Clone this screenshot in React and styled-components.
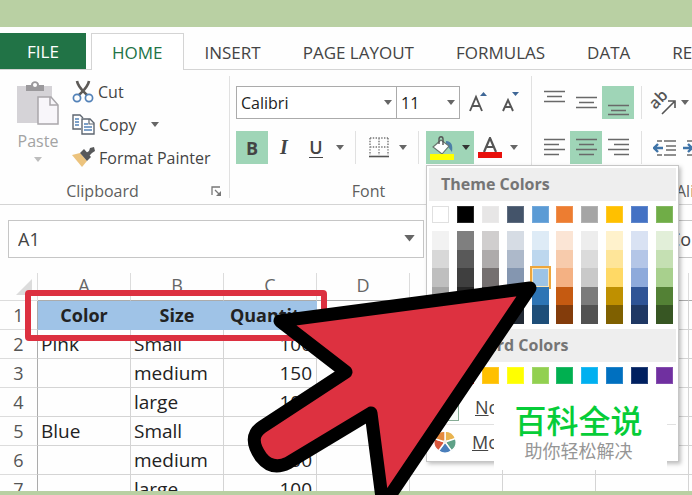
import React, { useState } from 'react';
import styled, { createGlobalStyle } from 'styled-components';

const GlobalStyle = createGlobalStyle`
  * {
    box-sizing: border-box;
  }

  body {
    margin: 0;
    background: #ffffff;
  }

  body, button, input, select {
    font-family: "Open Sans", "Noto Sans", sans-serif;
    font-size: 16px;
    color: #444444;
  }
`;

const Page = styled.div`
  position: relative;
  display: flex;
  flex-direction: column;
  height: 100vh;
  overflow: hidden;
  background: #fefefe;
`;

const TopBand = styled.div`
  flex: none;
  height: 27px;
  background: #b9d0a3;
`;

const BottomBand = styled.div`
  flex: none;
  height: 4px;
  background: #b9d0a3;
`;

const Tabs = styled.nav`
  display: flex;
  flex: none;
  height: 43px;
  padding-top: 6px;
  border-bottom: 1px solid #d4d4d4;
`;

const FileTab = styled.button`
  flex: none;
  width: 86px;
  margin-right: 5px;
  padding: 0;
  border: none;
  background: #217346;
  color: #ffffff;
  font-size: 17px;
`;

const Tab = styled.button`
  flex: none;
  height: 37px;
  padding: 0 20px;
  border: 1px solid ${({ $active }) => ($active ? '#d4d4d4' : 'transparent')};
  border-bottom: none;
  background: ${({ $active }) => ($active ? '#ffffff' : 'none')};
  color: ${({ $active }) => ($active ? '#217346' : '#444444')};
  font-size: 17px;
`;

const Ribbon = styled.div`
  display: flex;
  flex: none;
  height: 135px;
  padding-top: 6px;
  border-bottom: 1px solid #d4d4d4;
`;

const Group = styled.section`
  display: flex;
  flex: none;
  flex-direction: column;
  width: ${({ $width }) => $width}px;
`;

const GroupDivider = styled.div`
  flex: none;
  width: 1px;
  height: 122px;
  background: #e1e1e1;
`;

const GroupFooter = styled.div`
  display: flex;
  align-items: center;
  height: 26px;
`;

const GroupLabel = styled.span`
  flex: 1;
  text-align: center;
  color: #5f5f5f;
`;

const Launcher = styled.button`
  display: flex;
  width: 24px;
  padding: 2px 6px;
  border: none;
  background: none;
`;

const ClipboardBody = styled.div`
  display: flex;
  flex: 1;
`;

const PasteButton = styled.button`
  display: flex;
  flex-direction: column;
  align-items: center;
  width: 68px;
  padding: 5px 0 0 8px;
  border: none;
  background: none;
  color: #a3a3a3;
  line-height: 32px;
`;

const ClipboardList = styled.div`
  display: flex;
  flex-direction: column;
`;

const ClipboardButton = styled.button`
  display: flex;
  align-items: center;
  gap: 4px;
  height: 33px;
  padding: 0 4px 2px;
  border: none;
  background: none;

  svg:last-child {
    margin-left: 10px;
  }
`;

const Rows = styled.div`
  display: flex;
  flex: 1;
  flex-direction: column;
  gap: 12px;
  padding: 10px 0 0 6px;
`;

const Row = styled.div`
  display: flex;
  height: 33px;
`;

const SelectWrap = styled.div`
  position: relative;
  width: ${({ $width }) => $width}px;
  margin-right: ${({ $gap }) => $gap}px;

  > svg {
    position: absolute;
    right: 5px;
    top: 14px;
    pointer-events: none;
  }
`;

const Select = styled.select`
  width: 100%;
  height: 33px;
  padding: 0 4px;
  border: 1px solid #ababab;
  border-radius: 0;
  background: #ffffff;
  color: #222222;
  appearance: none;
`;

const Tool = styled.button`
  display: flex;
  flex: none;
  align-items: center;
  justify-content: center;
  width: ${({ $width }) => $width || 32}px;
  height: 33px;
  padding: 0;
  border: none;
  background: ${({ $on }) => ($on ? '#9fd5b7' : 'none')};
  font-size: 18px;
`;

const ToolCaret = styled(Tool)`
  width: 16px;
`;

const Bold = styled.b`
  font-weight: 700;
`;

const Italic = styled.i`
  font-family: "Liberation Serif", serif;
  font-size: 20px;
  font-weight: 700;
`;

const Underline = styled.span`
  border-bottom: 1px solid #444444;
  font-weight: 600;
  line-height: 20px;
`;

const ToolDivider = styled.div`
  flex: none;
  width: 1px;
  margin: 0 7px;
  background: #e1e1e1;
`;

const MenuAnchor = styled.div`
  position: relative;
  display: flex;
`;

const Menu = styled.div`
  position: absolute;
  z-index: 2;
  top: 34px;
  left: 0;
  width: 253px;
  padding: 2px;
  border: 1px solid #c6c6c6;
  background: #ffffff;
  box-shadow: 2px 2px 4px rgba(0, 0, 0, 0.25);
`;

const MenuTitle = styled.h2`
  margin: 0;
  padding-left: 12px;
  background: #eeeeee;
  color: #757575;
  font-size: 16px;
  font-weight: 700;
  line-height: 33px;
`;

const Swatches = styled.div`
  display: grid;
  grid-template-columns: repeat(10, 17px);
  justify-content: space-between;
  padding: 5px 3px;
`;

const Swatch = styled.button`
  height: 17px;
  padding: 0;
  border: 1px solid ${({ $light }) => ($light ? '#e0e0e0' : 'rgba(255, 255, 255, 0.15)')};
  background: ${({ $color }) => $color};
`;

const Shades = styled.div`
  display: grid;
  grid-template-columns: repeat(10, 17px);
  grid-template-rows: repeat(5, 1fr);
  justify-content: space-between;
  height: 101px;
  padding: 3px 3px 5px;
`;

const Shade = styled.button`
  padding: 0;
  border: none;
  background: ${({ $color }) => $color};
  outline: ${({ $picked }) => ($picked ? '2px solid #eda63c' : 'none')};
  box-shadow: ${({ $picked }) => ($picked ? 'inset 0 0 0 1px #fbe6b8' : 'none')};
`;

const MenuItem = styled.button`
  display: flex;
  align-items: center;
  gap: 16px;
  width: 100%;
  height: 35px;
  padding: 0 5px;
  border: none;
  border-top: 1px solid ${({ $line }) => ($line ? '#e1e1e1' : 'transparent')};
  background: none;
  font-size: 18px;
`;

const NoFillBox = styled.span`
  width: 25px;
  height: 27px;
  border: 1px solid #86ac95;
  background: #f6fbf8;
`;

const FormulaBar = styled.div`
  display: flex;
  flex: none;
  gap: 7px;
  padding: 15px 0 15px 8px;
`;

const NameBox = styled.div`
  position: relative;
  flex: none;
  width: 416px;

  > svg {
    position: absolute;
    right: 9px;
    top: 15px;
  }
`;

const CellInput = styled.input`
  display: block;
  width: 100%;
  height: 38px;
  padding: 0 9px;
  border: 1px solid #c6c6c6;
  font-size: 18px;
`;

const FormulaInput = styled(CellInput)`
  flex: 1;
  min-width: 320px;
  padding-left: 237px;
`;

const Sheet = styled.main`
  position: relative;
  flex: 1;
  min-height: 0;
  overflow: hidden;
`;

const Grid = styled.table`
  width: 782px;
  border-collapse: separate;
  border-spacing: 0;
  table-layout: fixed;
  color: #222222;
  font-size: 19px;
  line-height: 28px;
`;

const Corner = styled.th`
  width: 38px;
  height: 28px;
  padding: 5px 5px 5px 16px;
  border-right: 1px solid #dcdcdc;
  border-bottom: 1px solid #dcdcdc;

  svg {
    display: block;
  }
`;

const ColHead = styled.th`
  width: 93px;
  height: 28px;
  padding: 0 0 3px;
  border-right: 1px solid #dcdcdc;
  border-bottom: 1px solid #ababab;
  color: #666666;
  font-size: 18px;
  font-weight: 400;
  line-height: 24px;
`;

const RowHead = styled.th`
  height: 29px;
  padding: 0;
  border-right: 1px solid #ababab;
  border-bottom: 1px solid #dcdcdc;
  color: #555555;
  font-size: 18px;
  font-weight: 400;
`;

const Cell = styled.td`
  height: 29px;
  padding: 0 4px 0 3px;
  border-right: 1px solid #d4d4d4;
  border-bottom: 1px solid #d4d4d4;
  text-align: ${({ $align }) => $align || 'left'};
`;

const HeadCell = styled(Cell)`
  padding: 0;
  border-color: #9fc3e7;
  background: #9fc3e7;
  font-size: 18px;
  font-weight: 700;
  text-align: center;
`;

const Highlight = styled.div`
  position: absolute;
  top: 17px;
  left: 25px;
  width: 302px;
  height: 51px;
  border: 6px solid #dc3040;
  border-radius: 4px;
`;

const Pointer = styled.svg`
  position: absolute;
  z-index: 3;
  top: 270px;
  left: 240px;
  pointer-events: none;
`;

const Badge = styled.aside`
  position: absolute;
  z-index: 4;
  right: 25px;
  bottom: 25px;
  width: 173px;
  height: 82px;
  padding: 12px 4px 0 0;
  background: #ffffff;
  font-family: "Noto Sans CJK SC", sans-serif;
  text-align: center;
`;

const BadgeTitle = styled.div`
  color: #06cd38;
  font-size: 32px;
  font-weight: 500;
  line-height: 38px;
`;

const BadgeText = styled.div`
  color: #969696;
  font-size: 18px;
  line-height: 24px;
`;

const themeColors = ['#ffffff', '#000000', '#e7e6e6', '#44546a', '#5b9bd5', '#ed7d31', '#a5a5a5', '#ffc000', '#4472c4', '#70ad47'];

const shades = [
  ['#f2f2f2', '#7f7f7f', '#d0cece', '#d6dce4', '#deebf6', '#fbe5d5', '#ededed', '#fff2cc', '#d9e2f3', '#e2efd9'],
  ['#d8d8d8', '#595959', '#aeabab', '#adb9ca', '#bdd7ee', '#f7cbac', '#dbdbdb', '#fee599', '#b4c6e7', '#c5e0b3'],
  ['#bfbfbf', '#3f3f3f', '#757070', '#8496b0', '#9cc3e5', '#f4b183', '#c9c9c9', '#ffd965', '#8eaadb', '#a8d08d'],
  ['#a5a5a5', '#262626', '#3a3838', '#323f4f', '#2e75b5', '#c55a11', '#7b7b7b', '#bf9000', '#2f5496', '#538135'],
  ['#7f7f7f', '#0c0c0c', '#171616', '#222a35', '#1e4e79', '#833c0b', '#525252', '#7f6000', '#1f3864', '#375623'],
];

const standardColors = ['#c00000', '#ff0000', '#ffc000', '#ffff00', '#92d050', '#00b050', '#00b0f0', '#0070c0', '#002060', '#7030a0'];

const rows = [
  ['Pink', 'Small', '100'],
  ['', 'medium', '150'],
  ['', 'large', '100'],
  ['Blue', 'Small', '150'],
  ['', 'medium', '100'],
  ['', 'large', '100'],
];

const columns = ['A', 'B', 'C', 'D', 'E', 'F', 'G', 'H'];

const Caret = ({ size = 8, color = '#666666' }) => (
  <svg width={size} height={size / 2 + 1} viewBox="0 0 8 5" aria-hidden="true">
    <path d="M0 0h8L4 5z" fill={color} />
  </svg>
);

const PasteIcon = () => (
  <svg width="42" height="44" viewBox="0 0 42 44" fill="none">
    <path d="M0 5h35v37H0z" fill="#d5d3d7" />
    <path d="M9 10V4h5c0-5 8-5 8 0h5v6z" fill="#9b999c" />
    <circle cx="18" cy="4" r="2" fill="#fff" />
    <path d="M21 16h13l7 8v19H21z" fill="#f8f6fa" stroke="#a9a7ab" strokeWidth="1.5" />
    <path d="M33 16v8h8" stroke="#a9a7ab" strokeWidth="1.5" />
  </svg>
);

const CutIcon = () => (
  <svg width="22" height="23" viewBox="0 0 22 23" fill="none">
    <path d="M5 1c1 6 5 9 10 14M17 1c-1 6-5 9-10 14" stroke="#5d5a57" strokeWidth="2.6" />
    <circle cx="5" cy="18" r="3.6" stroke="#5382b8" strokeWidth="1.7" />
    <circle cx="17" cy="18" r="3.6" stroke="#5382b8" strokeWidth="1.7" />
  </svg>
);

const CopyIcon = () => (
  <svg width="23" height="21" viewBox="0 0 23 21" fill="none">
    <path d="M9 15H1V1h7l3 3" stroke="#5e6670" strokeWidth="1.4" />
    <path d="M3 5h4M3 8h4M3 11h4" stroke="#5382b8" strokeWidth="1.3" />
    <path d="M10 5h8l4 4v11H10z" fill="#fff" stroke="#5e6670" strokeWidth="1.4" />
    <path d="M17 5v5h5" stroke="#5e6670" strokeWidth="1.2" />
    <path d="M12 10h4M12 13h8M12 16h8" stroke="#5382b8" strokeWidth="1.3" />
  </svg>
);

const PainterIcon = () => (
  <svg width="23" height="21" viewBox="0 0 23 21">
    <path d="M0 8l8-2 7 8-5 6z" fill="#ecc37d" />
    <path d="M8 6l4-4 7 8-4 4z" fill="#57585a" />
    <path d="M14 6l3-2 1-3 4-1 1 4-3 2-3 3z" fill="#57585a" />
  </svg>
);

const LauncherIcon = () => (
  <svg width="11" height="11" viewBox="0 0 11 11" fill="none">
    <path d="M1 9V1h8M4 4l5 5" stroke="#777" strokeWidth="1.3" />
    <path d="M10 5v5H5z" fill="#777" />
  </svg>
);

const SizeIcon = ({ up }) => (
  <svg width="20" height="24" viewBox="0 0 20 24" fill="none">
    {up ? (
      <path d="M2 20L8 6l6 14M4 15h8" stroke="#555" strokeWidth="1.9" />
    ) : (
      <path d="M3 20L8 9l5 11M5 16h6" stroke="#555" strokeWidth="1.9" />
    )}
    <path d={up ? 'M12 5l3.5-4L19 5z' : 'M12 1h7l-3.5 4z'} fill="#3f6797" />
  </svg>
);

const BorderIcon = () => (
  <svg width="20" height="21" viewBox="0 0 20 21" fill="none">
    <path d="M1 1h18M1 10h18M1 1v17M10 1v17M19 1v17" stroke="#777" strokeWidth="1.4" strokeDasharray="1.4 1.4" />
    <path d="M0 19.5h20" stroke="#555" strokeWidth="1.6" />
  </svg>
);

const FillIcon = () => (
  <svg width="24" height="24" viewBox="0 0 24 24" fill="none">
    <path d="M16 5c6 0 7 5 6 11-2-2-3-5-6-7z" fill="#4c7fa8" />
    <path d="M3 11l8-7 8 6-7 8z" fill="#fff" stroke="#66756c" strokeWidth="1.1" />
    <path d="M9 8V3c0-3 4-3 4 0v6" stroke="#555" strokeWidth="1.4" />
    <path d="M0 18h24v6H0z" fill="#ffff00" />
  </svg>
);

const FontColorIcon = () => (
  <svg width="24" height="21" viewBox="0 0 24 21" fill="none">
    <path d="M6 15L12 1l6 14M8 10h8" stroke="#555" strokeWidth="2.2" />
    <path d="M0 15h24v6H0z" fill="#e8100c" />
  </svg>
);

const linePaths = {
  top: 'M0 3.5h21M3 8.5h15M0 13.5h21',
  middle: 'M0 9.5h21M3 14.5h15M0 19.5h21',
  bottom: 'M0 17.5h21M3 22.5h15M0 26.5h21',
  left: 'M0 6.5h21M0 11.5h15M0 16.5h21M0 21.5h15',
  center: 'M0 6.5h21M3 11.5h15M0 16.5h21M3 21.5h15',
  right: 'M0 6.5h21M6 11.5h15M0 16.5h21M6 21.5h15',
};

const LinesIcon = ({ kind }) => (
  <svg width="21" height="29" viewBox="0 0 21 29">
    <path d={linePaths[kind]} stroke="#696969" strokeWidth="1.4" />
  </svg>
);

const OrientationIcon = () => (
  <svg width="26" height="26" viewBox="0 0 26 26" fill="none">
    <text x="-1" y="15" transform="rotate(-45 8 10)" fontSize="16" fontWeight="600" fill="#555">ab</text>
    <path d="M12 24L24 12M18 11h7v7" stroke="#555" strokeWidth="1.6" />
  </svg>
);

const IndentIcon = ({ more }) => (
  <svg width="23" height="18" viewBox="0 0 23 18" fill="none">
    <path d="M4 2h5M11 2h12M13 7h10M13 11h10M4 16h5M11 16h12" stroke="#6b6b6b" strokeWidth="1.4" />
    <path d={more ? 'M0 9h8M5 5l4 4-4 4' : 'M10 9H2M5 5L1 9l4 4'} stroke="#3f74a8" strokeWidth="2.4" />
  </svg>
);

const PaletteIcon = () => (
  <svg width="22" height="22" viewBox="-11 -11 22 22" stroke="#fff" strokeWidth="1.4">
    <path d="M0 0V-11A11 11 0 0 1 10.5-3.4z" fill="#e9b44f" />
    <path d="M0 0L10.5-3.4A11 11 0 0 1 6.5 8.9z" fill="#5fa187" />
    <path d="M0 0L6.5 8.9A11 11 0 0 1-6.5 8.9z" fill="#4a7ebb" />
    <path d="M0 0L-6.5 8.9A11 11 0 0 1-10.5-3.4z" fill="#d9573c" />
    <path d="M0 0L-10.5-3.4A11 11 0 0 1 0-11z" fill="#e58a3e" />
    <circle r="2" fill="#f6eee6" stroke="none" />
  </svg>
);

const ColorMenu = ({ picked, onPick }) => (
  <Menu>
    <MenuTitle>Theme Colors</MenuTitle>
    <Swatches>
      {themeColors.map((color, i) => (
        <Swatch key={color} $color={color} $light={i === 0} aria-label={color} onClick={() => onPick(color)} />
      ))}
    </Swatches>
    <Shades>
      {shades.flat().map((color, i) => (
        <Shade key={i} $color={color} $picked={color === picked} aria-label={color} onClick={() => onPick(color)} />
      ))}
    </Shades>
    <MenuTitle>Standard Colors</MenuTitle>
    <Swatches>
      {standardColors.map((color) => (
        <Swatch key={color} $color={color} aria-label={color} onClick={() => onPick(color)} />
      ))}
    </Swatches>
    <MenuItem onClick={() => onPick('')}>
      <NoFillBox />
      <span><u>N</u>o Fill</span>
    </MenuItem>
    <MenuItem $line>
      <PaletteIcon />
      <span><u>M</u>ore Colors...</span>
    </MenuItem>
  </Menu>
);

const ClipboardGroup = () => (
  <Group $width={229}>
    <ClipboardBody>
      <PasteButton>
        <PasteIcon />
        Paste
        <Caret color="#bdbdbd" />
      </PasteButton>
      <ClipboardList>
        <ClipboardButton><CutIcon /><span>Cut</span></ClipboardButton>
        <ClipboardButton><CopyIcon /><span>Copy</span> <Caret /></ClipboardButton>
        <ClipboardButton><PainterIcon /><span>Format Painter</span></ClipboardButton>
      </ClipboardList>
    </ClipboardBody>
    <GroupFooter>
      <GroupLabel>Clipboard</GroupLabel>
      <Launcher aria-label="Clipboard settings"><LauncherIcon /></Launcher>
    </GroupFooter>
  </Group>
);

const FontGroup = () => {
  const [picked, setPicked] = useState('#9cc3e5');
  const [open, setOpen] = useState(true);

  return (
    <Group $width={301}>
      <Rows>
        <Row>
          <SelectWrap $width={161} $gap={-1}>
            <Select aria-label="Font"><option>Calibri</option></Select>
            <Caret />
          </SelectWrap>
          <SelectWrap $width={64} $gap={2}>
            <Select aria-label="Font size"><option>11</option></Select>
            <Caret />
          </SelectWrap>
          <Tool aria-label="Increase font size"><SizeIcon up /></Tool>
          <Tool aria-label="Decrease font size"><SizeIcon /></Tool>
        </Row>
        <Row>
          <Tool $on><Bold>B</Bold></Tool>
          <Tool><Italic>I</Italic></Tool>
          <Tool><Underline>U</Underline></Tool>
          <ToolCaret aria-label="Underline options"><Caret /></ToolCaret>
          <ToolDivider />
          <Tool aria-label="Borders"><BorderIcon /></Tool>
          <ToolCaret aria-label="Border options"><Caret /></ToolCaret>
          <ToolDivider />
          <MenuAnchor>
            <Tool $on aria-label="Fill color"><FillIcon /></Tool>
            <ToolCaret $on aria-label="Fill color options" onClick={() => setOpen(!open)}>
              <Caret color="#333333" />
            </ToolCaret>
            {open && <ColorMenu picked={picked} onPick={setPicked} />}
          </MenuAnchor>
          <Tool aria-label="Font color"><FontColorIcon /></Tool>
          <ToolCaret aria-label="Font color options"><Caret /></ToolCaret>
        </Row>
      </Rows>
      <GroupFooter>
        <GroupLabel>Font</GroupLabel>
        <Launcher aria-label="Font settings"><LauncherIcon /></Launcher>
      </GroupFooter>
    </Group>
  );
};

const AlignmentGroup = () => (
  <Group $width={364}>
    <Rows>
      <Row>
        <Tool aria-label="Top align"><LinesIcon kind="top" /></Tool>
        <Tool aria-label="Middle align"><LinesIcon kind="middle" /></Tool>
        <Tool $on aria-label="Bottom align"><LinesIcon kind="bottom" /></Tool>
        <ToolDivider />
        <Tool $width={28} aria-label="Orientation"><OrientationIcon /></Tool>
        <ToolCaret aria-label="Orientation options"><Caret /></ToolCaret>
      </Row>
      <Row>
        <Tool aria-label="Align left"><LinesIcon kind="left" /></Tool>
        <Tool $on aria-label="Center"><LinesIcon kind="center" /></Tool>
        <Tool aria-label="Align right"><LinesIcon kind="right" /></Tool>
        <ToolDivider />
        <Tool $width={30} aria-label="Decrease indent"><IndentIcon /></Tool>
        <Tool $width={30} aria-label="Increase indent"><IndentIcon more /></Tool>
      </Row>
    </Rows>
    <GroupFooter>
      <GroupLabel>Alignment</GroupLabel>
    </GroupFooter>
  </Group>
);

const SheetGrid = () => (
  <Grid>
    <thead>
      <tr>
        <Corner aria-label="Select all">
          <svg width="16" height="16" viewBox="0 0 16 16"><path d="M16 0v16H0z" fill="#dcdcdc" /></svg>
        </Corner>
        {columns.map((name) => (
          <ColHead key={name}>{name}</ColHead>
        ))}
      </tr>
    </thead>
    <tbody>
      <tr>
        <RowHead>1</RowHead>
        <HeadCell>Color</HeadCell>
        <HeadCell>Size</HeadCell>
        <HeadCell>Quantity</HeadCell>
        {columns.slice(3).map((name) => <Cell key={name} />)}
      </tr>
      {rows.map(([color, size, quantity], i) => (
        <tr key={i}>
          <RowHead>{i + 2}</RowHead>
          <Cell>{color}</Cell>
          <Cell>{size}</Cell>
          <Cell $align="right">{quantity}</Cell>
          {columns.slice(3).map((name) => <Cell key={name} />)}
        </tr>
      ))}
    </tbody>
  </Grid>
);

const App = () => {
  const [cellName, setCellName] = useState('A1');
  const [formula, setFormula] = useState('Color');

  return (
    <Page>
      <GlobalStyle />
      <TopBand />
      <Tabs>
        <FileTab>FILE</FileTab>
        <Tab $active>HOME</Tab>
        <Tab>INSERT</Tab>
        <Tab>PAGE LAYOUT</Tab>
        <Tab>FORMULAS</Tab>
        <Tab>DATA</Tab>
        <Tab>REVIEW</Tab>
      </Tabs>
      <Ribbon>
        <ClipboardGroup />
        <GroupDivider />
        <FontGroup />
        <GroupDivider />
        <AlignmentGroup />
      </Ribbon>
      <FormulaBar>
        <NameBox>
          <CellInput aria-label="Name box" value={cellName} onChange={(e) => setCellName(e.target.value)} />
          <Caret size={11} />
        </NameBox>
        <FormulaInput aria-label="Formula" value={formula} onChange={(e) => setFormula(e.target.value)} />
      </FormulaBar>
      <Sheet>
        <SheetGrid />
        <Highlight />
      </Sheet>
      <BottomBand />
      <Pointer width="310" height="250" viewBox="240 270 310 250" aria-hidden="true">
        <path
          d="M280 321L530 288L383 506L371 413L288 463Q272 471 261 457Q247 437 262 427L346 372Z"
          fill="#dd3140"
          stroke="#000000"
          strokeWidth="13"
          strokeLinejoin="round"
        />
      </Pointer>
      <Badge>
        <BadgeTitle>百科全说</BadgeTitle>
        <BadgeText>助你轻松解决</BadgeText>
      </Badge>
    </Page>
  );
};

export default App;
